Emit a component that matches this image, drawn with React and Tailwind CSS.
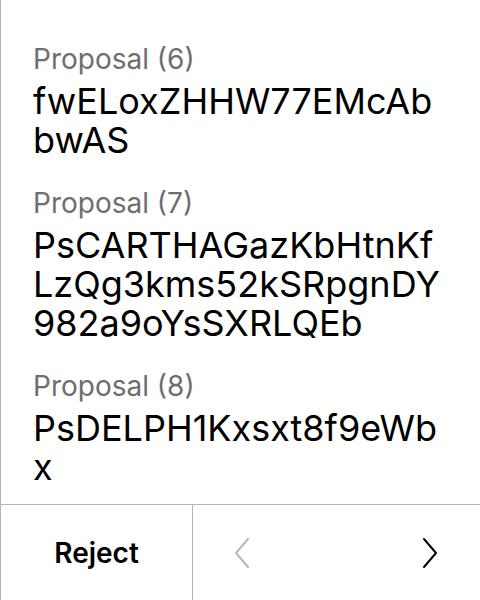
const proposals = [
  { n: 6, hash: "fwELoxZHHW77EMcAbbwAS" },
  { n: 7, hash: "PsCARTHAGazKbHtnKfLzQg3kms52kSRpgnDY982a9oYsSXRLQEb" },
  { n: 8, hash: "PsDELPH1Kxsxt8f9eWbx" },
];

function Chevron({ dir = "right", className = "" }) {
  return (
    <svg width="18" height="32" viewBox="0 0 18 32" fill="none" className={className}>
      <path
        d={dir === "left" ? "M15 2 L3 16 L15 30" : "M3 2 L15 16 L3 30"}
        stroke="currentColor"
        strokeWidth="2"
        strokeLinecap="round"
        strokeLinejoin="round"
      />
    </svg>
  );
}

export default function App() {
  return (
    <div
      className="w-[480px] h-[600px] bg-white border-l border-[#b5b5b5] flex flex-col text-black"
      style={{ fontFamily: "Inter, 'Liberation Sans', sans-serif" }}
    >
      <div className="flex-1 overflow-hidden px-8 pt-[38px] flex flex-col gap-[22px]">
        {proposals.map((p) => (
          <div key={p.n}>
            <div className="text-[28px] leading-[42px] mb-[2px] text-[#6e6e6e]">Proposal ({p.n})</div>
            <div className="text-[36px] leading-[39px] break-all">{p.hash}</div>
          </div>
        ))}
      </div>
      <div className="h-[96px] border-t border-[#b5b5b5] flex">
        <button className="w-[191px] flex items-center justify-center text-[28px] font-semibold">
          Reject
        </button>
        <div className="flex-1 border-l border-[#b5b5b5] flex items-center justify-between pl-[40px] pr-[41px]">
          <Chevron dir="left" className="text-[#b8b8b8]" />
          <Chevron dir="right" className="text-black" />
        </div>
      </div>
    </div>
  );
}
